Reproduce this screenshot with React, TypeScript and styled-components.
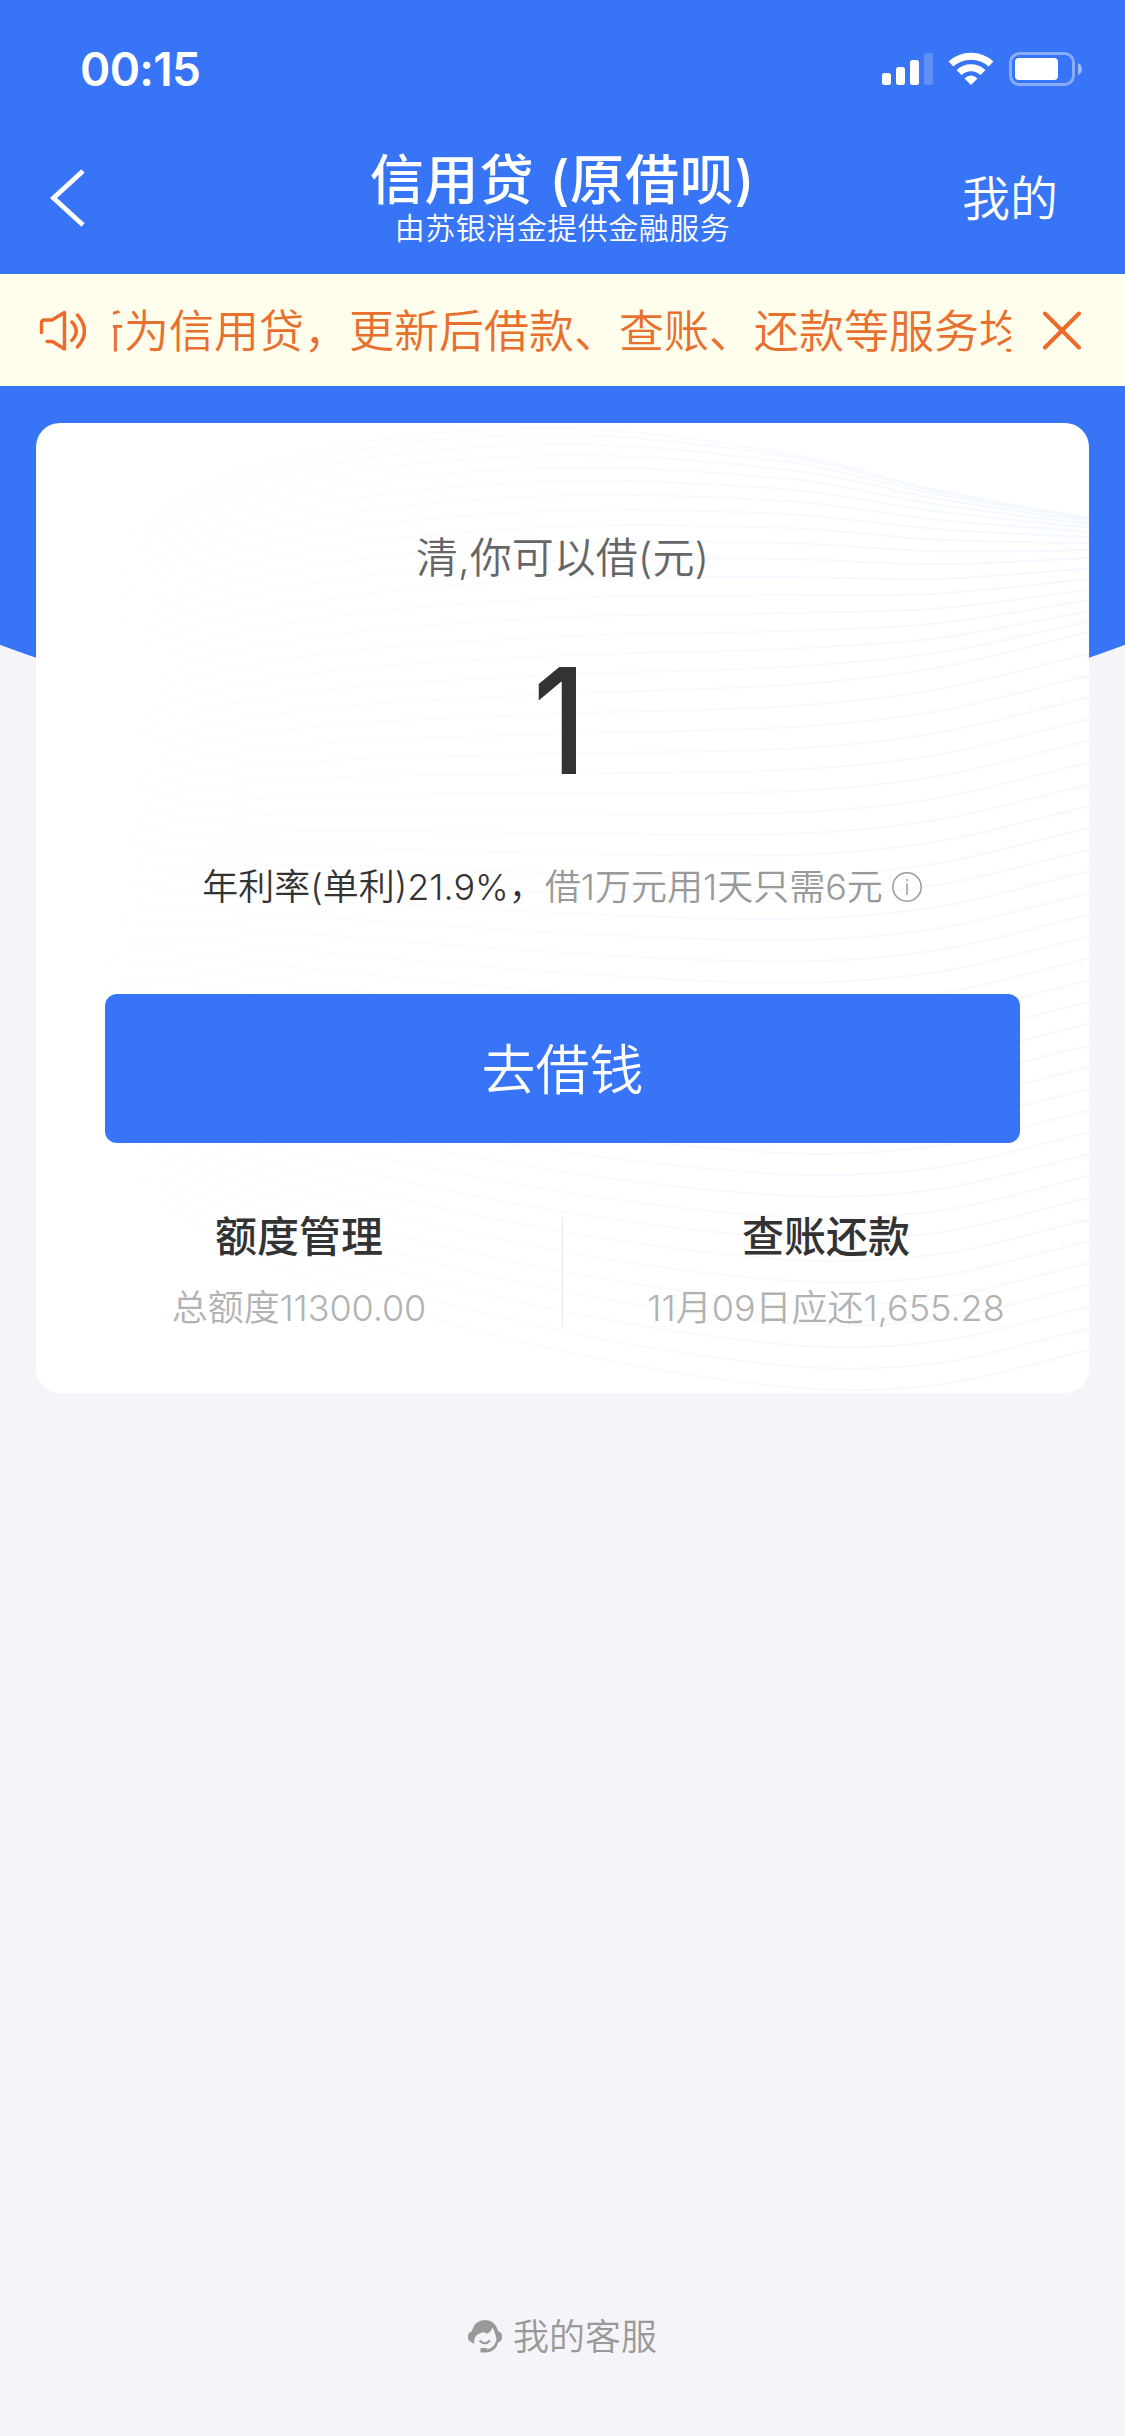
import React from "react";
import styled, { createGlobalStyle } from "styled-components";

const BLUE = "#3874f6";
const ORANGE = "#ee6a2b";

const GlobalStyle = createGlobalStyle`
  * { box-sizing: border-box; }
  body {
    margin: 0;
    background: #f4f4f9;
    font-family: "Inter", "Noto Sans CJK SC", sans-serif;
  }
`;

const Screen = styled.main`
  display: flex;
  flex-direction: column;
  width: 1125px;
  height: 2436px;
  overflow: hidden;
  background: #f4f4f9;
`;

const Line = styled.span<{ $size: number; $height: number; $color: string; $weight?: number; $spacing?: number }>`
  display: block;
  white-space: nowrap;
  font-size: ${(p) => p.$size}px;
  line-height: ${(p) => p.$height}px;
  color: ${(p) => p.$color};
  font-weight: ${(p) => p.$weight ?? 350};
  letter-spacing: ${(p) => p.$spacing ?? 0}px;
`;

const StatusBar = styled.header`
  display: flex;
  align-items: center;
  justify-content: space-between;
  height: 138px;
  padding: 0 43px 0 80px;
  background: ${BLUE};
`;

const StatusIcons = styled.svg`
  width: 200px;
  height: 34px;
`;

const NavBar = styled.nav`
  display: grid;
  grid-template-columns: 300px 1fr 300px;
  height: 136px;
  background: ${BLUE};
`;

const BackButton = styled.div`
  padding: 31px 0 0 49px;
`;

const TitleBlock = styled.div`
  display: flex;
  flex-direction: column;
  align-items: center;
  padding-top: 13px;
`;

const NavAction = styled.div`
  display: flex;
  justify-content: flex-end;
  padding: 31px 67px 0 0;
`;

const Notice = styled.section`
  display: flex;
  align-items: center;
  height: 112px;
  padding: 0 43px 0 38px;
  background: #fffdec;
`;

const Marquee = styled.div`
  width: 899px;
  margin: 0 31px 0 27px;
  padding-top: 3px;
  overflow: hidden;
`;

const MarqueeTrack = styled.div`
  margin-left: -34px;
`;

const Body = styled.section`
  flex: 1;
  display: flex;
  flex-direction: column;
  align-items: center;
  padding-top: 37px;
  background: radial-gradient(circle at 562.5px -1254px, ${BLUE} 1613.5px, transparent 1614.5px) no-repeat;
`;

const Card = styled.article`
  position: relative;
  display: flex;
  flex-direction: column;
  align-items: center;
  width: 1053px;
  height: 970px;
  padding-top: 105px;
  border-radius: 24px;
  background: #fff;
  overflow: hidden;
`;

const Waves = styled.svg`
  position: absolute;
  inset: 0;
`;

const Content = styled.div`
  position: relative;
  display: flex;
  flex-direction: column;
  align-items: center;
  width: 100%;
`;

const Amount = styled.strong`
  height: 150px;
  margin-top: 58px;
  font-size: 147px;
  line-height: 150px;
  font-weight: 520;
  color: #333;
  transform: translateX(-3px) scaleX(0.88);
`;

const RateRow = styled.div`
  display: flex;
  align-items: center;
  margin-top: 65px;
`;

const BorrowButton = styled.button`
  display: flex;
  align-items: center;
  justify-content: center;
  width: 915px;
  height: 149px;
  margin-top: 81px;
  padding: 4px 0 0;
  border: 0;
  border-radius: 12px;
  background: ${BLUE};
  font-family: inherit;
`;

const Links = styled.div`
  display: grid;
  grid-template-columns: 1fr 1px 1fr;
  width: 100%;
  margin-top: 66px;
`;

const LinkItem = styled.div`
  display: flex;
  flex-direction: column;
  align-items: center;
`;

const Divider = styled.i`
  height: 110px;
  margin-top: 8px;
  background: #e8e8ec;
`;

const Service = styled.footer`
  display: flex;
  align-items: center;
  gap: 11px;
  margin-top: auto;
  padding-bottom: 73px;
`;

/* Heights of four guide curves at fixed x stops; the other waves are blended between them. */
const stops = [0, 100, 250, 500, 750, 900, 1053];
const guides = [
  { at: 0, ys: [250, 105, 35, 5, 30, 67, 95] },
  { at: 10, ys: [330, 215, 165, 138, 136, 141, 135] },
  { at: 17, ys: [430, 330, 290, 272, 262, 245, 209] },
  { at: 50, ys: [700, 765, 847, 922, 964, 962, 927] },
];

function waveHeights(k: number): number[] {
  const upper = guides.findIndex((g) => g.at >= k);
  if (upper <= 0) return guides[0].ys;
  const a = guides[upper - 1];
  const b = guides[upper];
  const linear = (k - a.at) / (b.at - a.at);
  return a.ys.map((y, i) => {
    const power = upper === 1 ? (i > 3 ? 1.3 + (i - 3) * 0.25 : 1.3) : 1;
    return y + (b.ys[i] - y) * Math.pow(linear, power);
  });
}

function smoothPath(ys: number[]): string {
  const slope = ys.map((_, i) => {
    const l = Math.max(0, i - 1);
    const r = Math.min(ys.length - 1, i + 1);
    return (ys[r] - ys[l]) / (stops[r] - stops[l]);
  });
  let d = `M${stops[0]} ${ys[0].toFixed(1)}`;
  for (let i = 1; i < ys.length; i++) {
    const h = (stops[i] - stops[i - 1]) / 3;
    d += ` C${(stops[i - 1] + h).toFixed(1)} ${(ys[i - 1] + slope[i - 1] * h).toFixed(1)} ${(stops[i] - h).toFixed(1)} ${(ys[i] - slope[i] * h).toFixed(1)} ${stops[i]} ${ys[i].toFixed(1)}`;
  }
  return d;
}

const waves = Array.from({ length: 51 }, (_, k) => smoothPath(waveHeights(k)));

export default function App() {
  return (
    <Screen>
      <GlobalStyle />
      <StatusBar>
        <Line $size={46} $height={60} $color="#fff" $weight={560} $spacing={-0.7}>00:15</Line>
        <StatusIcons viewBox="0 0 200 34" fill="#fff">
          <rect x="0" y="21" width="9" height="12" rx="2.5" />
          <rect x="14" y="15" width="9" height="18" rx="2.5" />
          <rect x="28" y="8" width="9" height="25" rx="2.5" />
          <rect x="42" y="1" width="9" height="32" rx="2.5" opacity=".2" />
          <g fill="none" stroke="#fff" strokeWidth="7">
            <path d="M69 12 A29.5 29.5 0 0 1 109 12" />
            <path d="M77 20.5 A17.5 17.5 0 0 1 101 20.5" />
          </g>
          <path d="M89 33 L82.5 26.5 Q89 20.5 95.5 26.5 Z" />
          <rect x="128.5" y="1.5" width="63" height="31" rx="9" fill="none" stroke="#fff" strokeWidth="3" opacity=".4" />
          <rect x="133" y="6" width="43" height="22" rx="4" />
          <path d="M196 11 Q200 13 200 17 T196 23 Z" opacity=".5" />
        </StatusIcons>
      </StatusBar>
      <NavBar>
        <BackButton>
          <svg width="36" height="58" viewBox="0 0 36 58" fill="none" stroke="#fff" strokeWidth="4.8">
            <path d="M34 2 L4.5 29 L34 56" />
          </svg>
        </BackButton>
        <TitleBlock>
          <Line $size={54} $height={60} $color="#fff" $weight={500} $spacing={0.8}>信用贷 (原借呗)</Line>
          <Line $size={30} $height={35} $color="#fff" $spacing={0.5}>由苏银消金提供金融服务</Line>
        </TitleBlock>
        <NavAction>
          <Line $size={48} $height={60} $color="#fff">我的</Line>
        </NavAction>
      </NavBar>
      <Notice>
        <svg width="48" height="44" viewBox="0 0 48 44" fill="none" stroke={ORANGE} strokeWidth="3.4" strokeLinecap="round" strokeLinejoin="round">
          <path d="M3.5 24.5 V15 Q3.5 12 6.5 12 H14 L26.5 4.5 V41 L14.5 33.5 H9" />
          <path d="M34 14 Q42.5 23 34 32.5 M39.5 7 Q53.5 23 39.5 39" />
        </svg>
        <Marquee>
          <MarqueeTrack>
            <Line $size={45} $height={64} $color="#e8702f">新为信用贷，更新后借款、查账、还款等服务均</Line>
          </MarqueeTrack>
        </Marquee>
        <svg width="40" height="40" viewBox="0 0 40 40" fill="none" stroke={ORANGE} strokeWidth="4" strokeLinecap="round">
          <path d="M3 3.5 L37 37.5 M37 3.5 L3 37.5" />
        </svg>
      </Notice>
      <Body>
        <Card>
          <Waves width="1053" height="970" viewBox="0 0 1053 970" fill="none" stroke="url(#fade)" strokeWidth="2">
            <defs>
              <linearGradient id="fade" gradientUnits="userSpaceOnUse" x1="0" y1="0" x2="1053" y2="0">
                <stop offset="0" stopColor="#fbfcfe" stopOpacity="0" />
                <stop offset=".2" stopColor="#fbfcfe" />
                <stop offset=".5" stopColor="#f9fbfe" />
                <stop offset="1" stopColor="#f3f8fe" />
              </linearGradient>
            </defs>
            {waves.map((d) => <path key={d} d={d} />)}
          </Waves>
          <Content>
            <Line $size={42} $height={60} $color="#666">清,你可以借(元)</Line>
            <Amount>1</Amount>
            <RateRow>
              <Line $size={36} $height={52} $color="#333">年利率(单利)21.9%，</Line>
              <Line $size={36} $height={52} $color="#999">借1万元用1天只需6元</Line>
              <svg width="40" height="32" viewBox="-9 0 40 32" fill="none" stroke="#999" strokeWidth="1.5">
                <circle cx="15" cy="16" r="14.2" />
                <path d="M15 12.5 V24 M15 8 V10" />
              </svg>
            </RateRow>
            <BorrowButton>
              <Line $size={54} $height={70} $color="#fff">去借钱</Line>
            </BorrowButton>
            <Links>
              <LinkItem>
                <Line $size={42} $height={56} $color="#333" $weight={500}>额度管理</Line>
                <Line $size={36} $height={86} $color="#b2b2b2" $spacing={-0.1}>总额度11300.00</Line>
              </LinkItem>
              <Divider />
              <LinkItem>
                <Line $size={42} $height={56} $color="#333" $weight={500}>查账还款</Line>
                <Line $size={36} $height={86} $color="#b2b2b2">11月09日应还1,655.28</Line>
              </LinkItem>
            </Links>
          </Content>
        </Card>
        <Service>
          <svg width="34" height="34" viewBox="0 0 34 34">
            <path
              fill="#999"
              fillRule="evenodd"
              d="M3.5 11.5 Q7 0 17 0 Q27 0 30.5 11.5 Q34 12 34 17 Q34 21.5 30.5 22 Q27 32.5 18 32.5 H12.5 V28 H19 V29.5 Q27 28 28.5 19 Q27 12 24.5 7.5 Q22 13.5 18.5 13.5 Q15 11 12 13.5 Q6 14.5 6 24 Q4.5 23 3.5 22 Q0 21.5 0 17 Q0 12 3.5 11.5 Z"
            />
            <path d="M11.5 20.5 Q17 26 22 20.5" fill="none" stroke="#999" strokeWidth="2" />
          </svg>
          <Line $size={36} $height={52} $color="#999">我的客服</Line>
        </Service>
      </Body>
    </Screen>
  );
}
